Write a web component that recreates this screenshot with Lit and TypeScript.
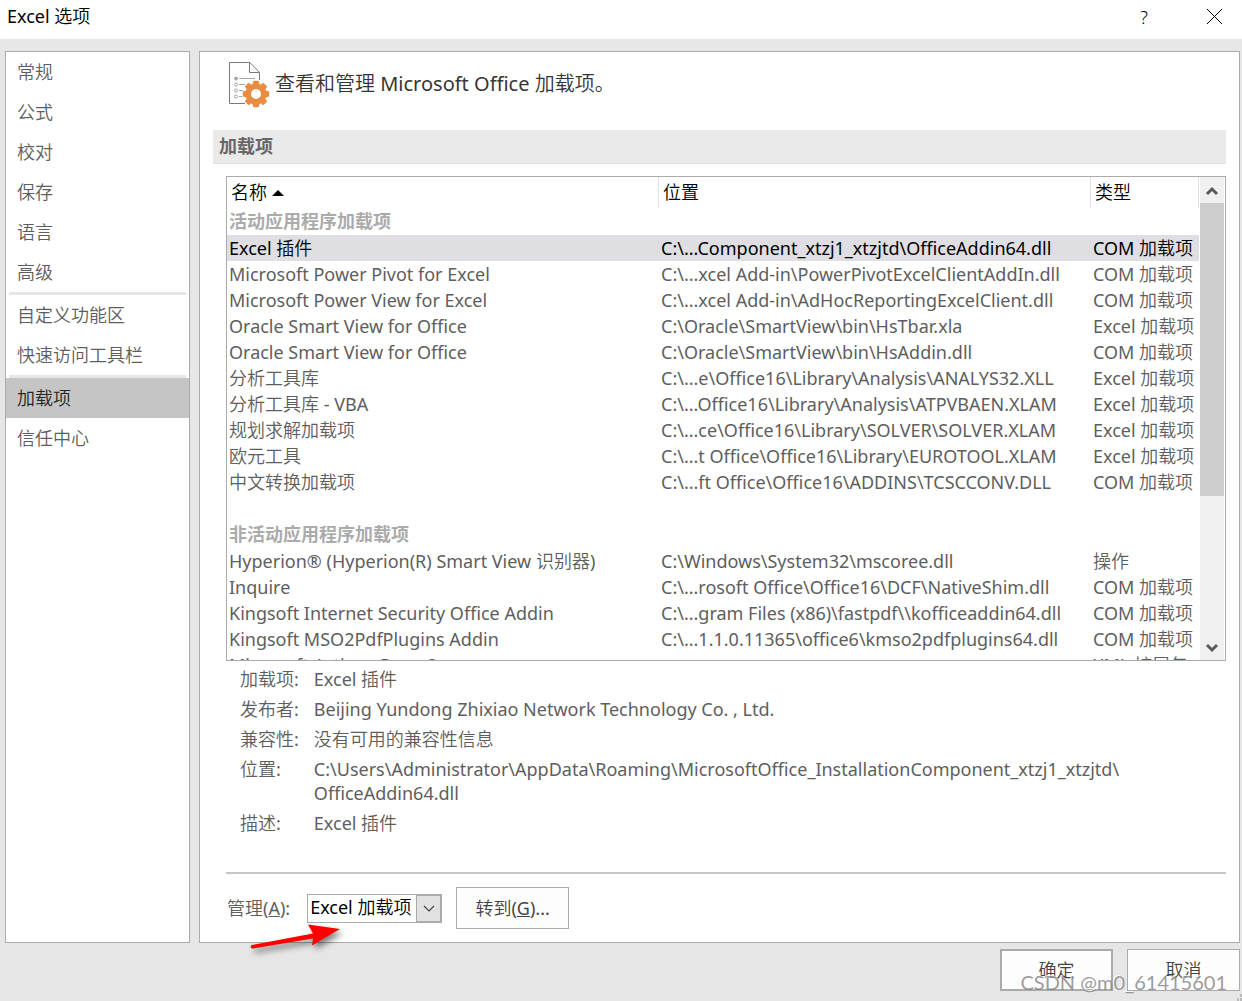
import { LitElement, html, css, svg, nothing } from "lit";
import { customElement, property, state } from "lit/decorators.js";
import { classMap } from "lit/directives/class-map.js";

interface Addin {
  name: string;
  location: string;
  type: string;
}

const ACTIVE: Addin[] = [
  { name: "Excel 插件", location: "C:\\...Component_xtzj1_xtzjtd\\OfficeAddin64.dll", type: "COM 加载项" },
  { name: "Microsoft Power Pivot for Excel", location: "C:\\...xcel Add-in\\PowerPivotExcelClientAddIn.dll", type: "COM 加载项" },
  { name: "Microsoft Power View for Excel", location: "C:\\...xcel Add-in\\AdHocReportingExcelClient.dll", type: "COM 加载项" },
  { name: "Oracle Smart View for Office", location: "C:\\Oracle\\SmartView\\bin\\HsTbar.xla", type: "Excel 加载项" },
  { name: "Oracle Smart View for Office", location: "C:\\Oracle\\SmartView\\bin\\HsAddin.dll", type: "COM 加载项" },
  { name: "分析工具库", location: "C:\\...e\\Office16\\Library\\Analysis\\ANALYS32.XLL", type: "Excel 加载项" },
  { name: "分析工具库 - VBA", location: "C:\\...Office16\\Library\\Analysis\\ATPVBAEN.XLAM", type: "Excel 加载项" },
  { name: "规划求解加载项", location: "C:\\...ce\\Office16\\Library\\SOLVER\\SOLVER.XLAM", type: "Excel 加载项" },
  { name: "欧元工具", location: "C:\\...t Office\\Office16\\Library\\EUROTOOL.XLAM", type: "Excel 加载项" },
  { name: "中文转换加载项", location: "C:\\...ft Office\\Office16\\ADDINS\\TCSCCONV.DLL", type: "COM 加载项" },
];

const INACTIVE: Addin[] = [
  { name: "Hyperion® (Hyperion(R) Smart View 识别器)", location: "C:\\Windows\\System32\\mscoree.dll", type: "操作" },
  { name: "Inquire", location: "C:\\...rosoft Office\\Office16\\DCF\\NativeShim.dll", type: "COM 加载项" },
  { name: "Kingsoft Internet Security Office Addin", location: "C:\\...gram Files (x86)\\fastpdf\\\\kofficeaddin64.dll", type: "COM 加载项" },
  { name: "Kingsoft MSO2PdfPlugins Addin", location: "C:\\...1.1.0.11365\\office6\\kmso2pdfplugins64.dll", type: "COM 加载项" },
  { name: "Microsoft Actions Pane 3", location: "", type: "XML 扩展包" },
];

const NAV: string[][] = [
  ["常规", "公式", "校对", "保存", "语言", "高级"],
  ["自定义功能区", "快速访问工具栏"],
  ["加载项", "信任中心"],
];

const DETAILS: [string, string[]][] = [
  ["加载项:", ["Excel 插件"]],
  ["发布者:", ["Beijing Yundong Zhixiao Network Technology Co. , Ltd."]],
  ["兼容性:", ["没有可用的兼容性信息"]],
  ["位置:", ["C:\\Users\\Administrator\\AppData\\Roaming\\MicrosoftOffice_InstallationComponent_xtzj1_xtzjtd\\", "OfficeAddin64.dll"]],
  ["描述:", ["Excel 插件"]],
];

const base = css`
  :host {
    font-family: "Noto Sans", "Noto Sans CJK SC DemiLight", "Noto Sans CJK SC Light", "Noto Sans CJK SC", sans-serif;
    font-size: 18px;
    font-weight: 400;
    color: #5e5e5e;
  }
  * {
    box-sizing: border-box;
  }
  button,
  select {
    font: inherit;
    color: inherit;
    border-radius: 0;
    margin: 0;
  }
`;

@customElement("options-nav")
export class OptionsNav extends LitElement {
  @state() private current = "加载项";

  static styles = [
    base,
    css`
      :host {
        display: block;
        background: #fff;
        border: 1px solid #ababab;
      }
      .item {
        display: block;
        width: 100%;
        height: 40px;
        padding: 1px 11px 0;
        border: 0;
        background: none;
        text-align: left;
        line-height: 39px;
      }
      .item.on {
        background: #c5c5c5;
        color: #262626;
      }
      .rule {
        height: 3px;
        margin: 0 3px;
        border: 0;
        background: #e6e6e6;
      }
    `,
  ];

  render() {
    return html`<nav>
      ${NAV.map(
        (group, i) => html`${i ? html`<hr class="rule" />` : nothing}
          ${group.map(
            (label) => html`<button
              type="button"
              class=${classMap({ item: true, on: label === this.current })}
              @click=${() => (this.current = label)}
            >${label}</button>`
          )}`
      )}
    </nav>`;
  }
}

@customElement("addin-list")
export class AddinList extends LitElement {
  @property({ type: Number }) selected = 0;

  static styles = [
    base,
    css`
      :host {
        display: flex;
        overflow: hidden;
        border: 1px solid #ababab;
        background: #fff;
      }
      .view {
        flex: 1;
        min-width: 0;
        overflow: hidden;
      }
      table {
        width: 100%;
        table-layout: fixed;
        border-collapse: separate;
        border-spacing: 0;
      }
      .location {
        width: 432px;
      }
      .type {
        width: 108px;
      }
      th,
      td {
        padding: 0 0 0 2px;
        text-align: left;
        white-space: nowrap;
        overflow: hidden;
      }
      .head th {
        height: 31px;
        padding-left: 4px;
        border-right: 1px solid #e1e1e1;
        color: #000;
        font-weight: 400;
        line-height: 31px;
      }
      .sort {
        vertical-align: 3px;
      }
      .group th {
        height: 27px;
        color: #ababab;
        font-family: "Noto Sans", "Noto Sans CJK SC", sans-serif;
        font-weight: 700;
        line-height: 27px;
      }
      td {
        height: 26px;
        line-height: 26px;
      }
      .on td {
        background: #dfdee3;
        color: #000;
      }
      .bar {
        display: flex;
        flex-direction: column;
        width: 26px;
        padding: 0 1px;
        background: linear-gradient(#f0f0f0, #f0f0f0) content-box;
      }
      .step {
        display: grid;
        place-items: center;
        height: 26px;
        padding: 2px 0 0;
        border: 0;
        background: none;
      }
      .track {
        flex: 1;
      }
      .thumb {
        height: 68%;
        background: #cdcdcd;
      }
    `,
  ];

  private row = (a: Addin, index: number) => html`<tr
    class=${classMap({ on: index === this.selected })}
    @click=${() => (this.selected = index)}
  >
    <td>${a.name}</td>
    <td>${a.location}</td>
    <td>${a.type}</td>
  </tr>`;

  private step(label: string, d: string) {
    return html`<button type="button" class="step" aria-label=${label}>
      <svg width="14" height="10" viewBox="0 0 14 10" fill="none" stroke="#5a5a5a" stroke-width="3">
        ${svg`<path d=${d} />`}
      </svg>
    </button>`;
  }

  render() {
    return html`
      <div class="view">
        <table>
          <colgroup>
            <col />
            <col class="location" />
            <col class="type" />
          </colgroup>
          <thead>
            <tr class="head">
              <th scope="col">
                名称
                <svg class="sort" width="12" height="6" viewBox="0 0 12 6"><path d="M0 6 6 0l6 6z" /></svg>
              </th>
              <th scope="col">位置</th>
              <th scope="col">类型</th>
            </tr>
          </thead>
          <tbody>
            <tr class="group"><th colspan="3" scope="rowgroup">活动应用程序加载项</th></tr>
            ${ACTIVE.map((a, i) => this.row(a, i))}
            <tr><td colspan="3"></td></tr>
          </tbody>
          <tbody>
            <tr class="group"><th colspan="3" scope="rowgroup">非活动应用程序加载项</th></tr>
            ${INACTIVE.map((a, i) => this.row(a, i + ACTIVE.length))}
          </tbody>
        </table>
      </div>
      <div class="bar">
        ${this.step("向上滚动", "M2 8l5-5 5 5")}
        <div class="track"><div class="thumb"></div></div>
        ${this.step("向下滚动", "M2 2l5 5 5-5")}
      </div>
    `;
  }
}

@customElement("app-root")
export class AppRoot extends LitElement {
  static styles = [
    base,
    css`
      :host {
        position: relative;
        display: flex;
        flex-direction: column;
        height: 100vh;
        min-height: 720px;
        overflow: hidden;
        background: #e6e6e6;
      }
      .title {
        display: flex;
        align-items: center;
        height: 39px;
        padding: 0 19px 6px 7px;
        background: #fff;
        color: #000;
      }
      .title h1 {
        flex: 1;
        margin: 0;
        font-size: 18px;
        font-weight: 400;
        line-height: 30px;
        padding-bottom: 2px;
      }
      .tool {
        display: grid;
        place-items: center;
        padding: 0;
        border: 0;
        background: none;
        font-weight: 300;
        line-height: 32px;
      }
      .close {
        margin-left: 58px;
        width: 17px;
      }
      .body {
        flex: 1;
        min-height: 0;
        display: grid;
        grid-template-columns: 185px minmax(0, 1fr);
        gap: 9px;
        padding: 12px 2px 6px 5px;
      }
      .page {
        display: flex;
        flex-direction: column;
        min-height: 0;
        padding: 10px 13px 13px;
        border: 1px solid #ababab;
        background: #fff;
      }
      .intro {
        display: flex;
        gap: 5px;
        height: 68px;
        padding-left: 16px;
        color: #363636;
        font-size: 20px;
        line-height: 44px;
      }
      .intro p {
        margin: 0;
      }
      .section {
        margin: 0 0 12px;
        padding-left: 6px;
        border-bottom: 1px solid #e1e1e1;
        background: #eaeaea;
        color: #666;
        font-family: "Noto Sans", "Noto Sans CJK SC", sans-serif;
        font-size: 18px;
        font-weight: 700;
        line-height: 33px;
      }
      .list {
        flex: 1;
        min-height: 0;
        margin-left: 13px;
      }
      .details {
        display: grid;
        grid-template-columns: auto 1fr;
        gap: 6px 15px;
        margin: 0 0 37px;
        padding: 6px 0 0 27px;
        line-height: 24px;
      }
      .details dt,
      .details dd {
        margin: 0;
      }
      .details .part {
        display: block;
      }
      .manage {
        display: flex;
        align-items: center;
        gap: 14px;
        margin-left: 13px;
        padding-top: 13px;
        border-top: 2px solid #c6c6c6;
      }
      .manage label {
        padding: 0 3px 2px 1px;
      }
      .combo {
        position: relative;
        display: flex;
      }
      .combo select {
        width: 135px;
        height: 29px;
        padding: 0 26px 2px 2px;
        border: 1px solid #ababab;
        background: #fff;
        color: #000;
        appearance: none;
        line-height: 25px;
      }
      .drop {
        position: absolute;
        top: 0;
        right: 0;
        bottom: 0;
        display: grid;
        place-items: center;
        width: 26px;
        border: 2px solid #ababab;
        border-left-width: 1px;
        background: #e1e1e1;
        pointer-events: none;
      }
      .push {
        width: 113px;
        height: 42px;
        padding: 0 0 2px;
        border: 1px solid #ababab;
        background: #fdfdfd;
        color: #444;
      }
      .primary {
        border-width: 2px;
      }
      .footer {
        display: flex;
        justify-content: flex-end;
        gap: 14px;
        padding: 0 2px 10px;
      }
      .pointer {
        position: absolute;
        top: 27px;
        left: -61px;
        overflow: visible;
        pointer-events: none;
        filter: drop-shadow(3px 4px 3px rgba(0, 0, 0, 0.5));
      }
      .mark {
        position: absolute;
        right: 15px;
        bottom: 6px;
        color: rgba(130, 130, 130, 0.8);
        font-family: Lato, sans-serif;
        font-size: 20px;
        line-height: 26px;
        text-shadow: -1px -1px 0 rgba(255, 255, 255, 0.8);
        pointer-events: none;
      }
      .grip {
        position: absolute;
        right: 0;
        bottom: 0;
      }
    `,
  ];

  private icon() {
    const tooth = (angle: number) =>
      svg`<path d="M23.6 22.2 24.4 18.8h5.2l.8 3.4z" transform="rotate(${angle} 27 32)" />`;
    return html`<svg width="41" height="46" viewBox="0 0 41 46" aria-hidden="true">
      <path d="M16 41.500H.500v-41H21L30.500 10.500V18M20.500.500v10h10" fill="none" stroke="#7a7a7a" />
      <g stroke="#a6a6a6" fill="none">
        <path d="M10 16.500h16M10 22.500h6M10 28.500h4M10 34.500h3" />
        <circle cx="7" cy="16.500" r="1.500" fill="#a6a6a6" />
        <circle cx="7" cy="22.500" r="1.500" />
        <circle cx="7" cy="28.500" r="1.500" />
        <circle cx="7" cy="34.500" r="1.500" />
      </g>
      <g fill="#e88c41">
        ${[0, 45, 90, 135, 180, 225, 270, 315].map(tooth)}
        <path fill-rule="evenodd" d="M27 21.500a10.500 10.500 0 1 0 0 21 10.500 10.500 0 0 0 0-21zm0 5.500a5 5 0 1 1 0 10 5 5 0 0 1 0-10z" />
      </g>
    </svg>`;
  }

  render() {
    return html`
      <header class="title">
        <h1>Excel 选项</h1>
        <button type="button" class="tool" aria-label="帮助">?</button>
        <button type="button" class="tool close" aria-label="关闭">
          <svg width="17" height="17" viewBox="0 0 17 17" stroke="#000"><path d="M1 1l15 15M16 1 1 16" /></svg>
        </button>
      </header>
      <div class="body">
        <options-nav></options-nav>
        <main class="page">
          <div class="intro">
            ${this.icon()}
            <p>查看和管理 Microsoft Office 加载项。</p>
          </div>
          <h2 class="section">加载项</h2>
          <addin-list class="list"></addin-list>
          <dl class="details">
            ${DETAILS.map(
              ([term, parts]) => html`<dt>${term}</dt>
                <dd>${parts.map((p) => html`<span class="part">${p}</span>`)}</dd>`
            )}
          </dl>
          <div class="manage">
            <label for="kind">管理(<u>A</u>):</label>
            <div class="combo">
              <select id="kind">
                <option>Excel 加载项</option>
                <option>COM 加载项</option>
              </select>
              <span class="drop">
                <svg width="12" height="7" viewBox="0 0 12 7" fill="none" stroke="#444" stroke-width="1.200"><path d="M1 1l5 5 5-5" /></svg>
              </span>
              <svg class="pointer" width="100" height="30" viewBox="0 0 100 30">
                <path d="M5 24.500Q4 28 7 27.500L67 17.500 66 24.500 94 8 62 3.500 67 12.500 6 24z" fill="#fe0000" />
              </svg>
            </div>
            <button type="button" class="push">转到(<u>G</u>)...</button>
          </div>
        </main>
      </div>
      <footer class="footer">
        <button type="button" class="push primary">确定</button>
        <button type="button" class="push">取消</button>
      </footer>
      <svg class="grip" width="5" height="7" viewBox="0 0 5 7" fill="#bbb"><path d="M3 0h2v3H3zM0 4h2v3H0zM3 4h2v3H3z" /></svg>
      <span class="mark">CSDN @m0_61415601</span>
    `;
  }
}
